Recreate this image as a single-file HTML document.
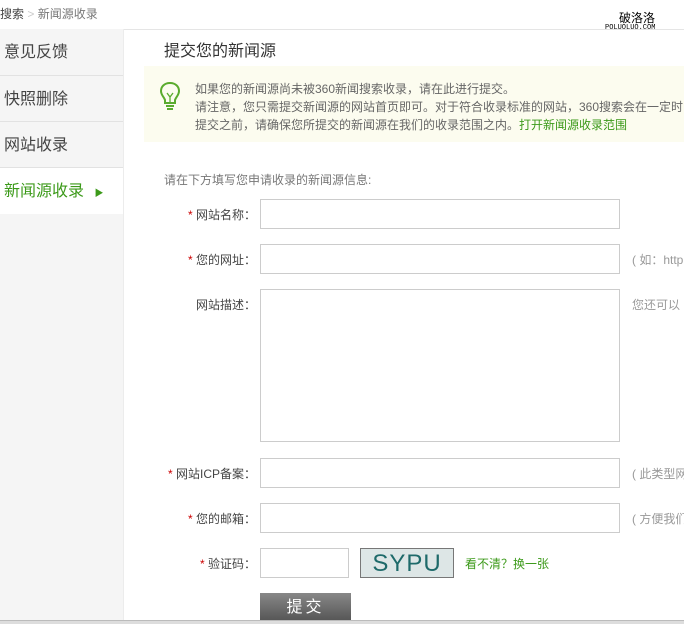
<!DOCTYPE html>
<html><head><meta charset="utf-8"><style>
*{margin:0;padding:0;box-sizing:border-box}
body{width:684px;height:624px;overflow:hidden;background:#fff;font-family:"Liberation Sans","Noto Sans CJK SC",sans-serif;font-size:12px;color:#666;position:relative}
.a{position:absolute;white-space:nowrap}
.side{position:absolute;left:0;top:29px;width:124px;height:595px;background:#f5f5f5;border-right:1px solid #ececec}
.si{position:absolute;left:0;width:123px;height:46px;line-height:46px;font-size:16px;color:#444;padding-left:4px;border-bottom:1px solid #e2e2e2}
.inp{position:absolute;left:260px;width:360px;height:30px;border:1px solid #ccc;background:#fff}
.lab{position:absolute;right:428px;font-size:12px;color:#444;white-space:nowrap}
.lab b{color:#c00;font-weight:normal}
.hint{position:absolute;left:632px;color:#999;white-space:nowrap}
</style></head><body>
<div class="a" style="left:0;top:5px;color:#444">搜索 <span style="color:#ccc">&gt;</span> <span style="color:#777">新闻源收录</span></div>
<div class="a" style="left:619px;top:9px;color:#000;font-size:12px">破洛洛</div>
<div class="a" style="left:605px;top:24px;color:#000;font-size:7px;font-family:'Liberation Mono',monospace">POLUOLUO.COM</div>
<div class="a" style="left:0;top:29px;width:684px;height:1px;background:#e5e5e5"></div>
<div class="side">
<div class="si" style="top:0;height:47px;line-height:48px">意见反馈</div>
<div class="si" style="top:47px;line-height:48px">快照删除</div>
<div class="si" style="top:93px;line-height:48px">网站收录</div>
<div class="si" style="top:139px;line-height:48px;color:#3c9a1a;border:none;background:#fff">新闻源收录 <span style="font-size:9px;margin-left:6px">▶</span></div>
</div>
<div class="a" style="left:164px;top:37px;font-size:16px;color:#333">提交您的新闻源</div>
<div class="a" style="left:144px;top:66px;width:540px;height:76px;background:#fcfcef"></div>
<svg class="a" style="left:158px;top:81px" width="24" height="30" viewBox="0 0 24 30"><path d="M12 2C6 2 3 6 3 10c0 4 3 6 4 9v3h10v-3c1-3 4-5 4-9 0-4-3-8-9-8z" fill="none" stroke="#5aab2e" stroke-width="2"/><path d="M9 12l3 4 3-4M12 16v6" fill="none" stroke="#5aab2e" stroke-width="1.3"/><path d="M8 25h8M9 28h6" stroke="#5aab2e" stroke-width="2"/></svg>
<div class="a" style="left:195px;top:80px;line-height:18px;color:#666">如果您的新闻源尚未被360新闻搜索收录，请在此进行提交。<br>请注意，您只需提交新闻源的网站首页即可。对于符合收录标准的网站，360搜索会在一定时<br>提交之前，请确保您所提交的新闻源在我们的收录范围之内。<span style="color:#3c9a1a">打开新闻源收录范围</span></div>
<div class="a" style="left:164px;top:171px;color:#777">请在下方填写您申请收录的新闻源信息:</div>
<div class="lab" style="top:206px"><b>*</b> 网站名称：</div><div class="inp" style="top:199px"></div>
<div class="lab" style="top:251px"><b>*</b> 您的网址：</div><div class="inp" style="top:244px"></div><div class="hint" style="top:251px">( 如：http</div>
<div class="lab" style="top:296px">网站描述：</div><div class="inp" style="top:289px;height:153px"></div><div class="hint" style="top:296px">您还可以</div>
<div class="lab" style="top:465px"><b>*</b> 网站ICP备案：</div><div class="inp" style="top:458px"></div><div class="hint" style="top:465px">( 此类型网</div>
<div class="lab" style="top:510px"><b>*</b> 您的邮箱：</div><div class="inp" style="top:503px"></div><div class="hint" style="top:510px">( 方便我们</div>
<div class="lab" style="top:555px"><b>*</b> 验证码：</div><div class="inp" style="top:548px;width:89px"></div>
<div class="a" style="left:360px;top:548px;width:94px;height:30px;background:#dde6e6;border:1px solid #777;color:#1e6a6a;font-size:24px;line-height:30px;text-align:center;letter-spacing:1px">SYPU</div>
<div class="a" style="left:465px;top:555px;color:#3c9a1a">看不清？换一张</div>
<div class="a" style="left:260px;top:593px;width:91px;height:28px;background:linear-gradient(#888,#555);color:#fff;font-size:16px;text-align:center;line-height:30px;letter-spacing:3px">提交</div>
<div class="a" style="left:0;top:620px;width:684px;height:4px;background:#ddd;border-top:1px solid #bbb"></div>
</body></html>
